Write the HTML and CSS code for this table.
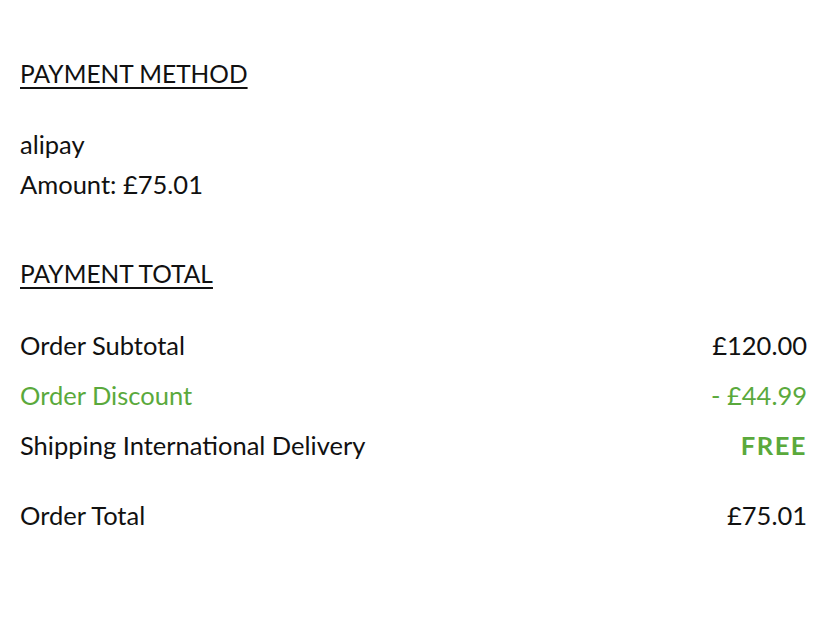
FILE: index.html
```html
<!DOCTYPE html>
<html lang="en">
<head>
    <meta charset="UTF-8">
    <meta name="viewport" content="width=device-width, initial-scale=1.0">
    <title>Payment</title>
    <link rel="stylesheet" href="styles.css">
</head>
<body>
    <main>
        <section class="block">
            <h2 class="block-title">Payment Method</h2>
            <div class="method">
                <p>alipay</p>
                <p>Amount: £75.01</p>
            </div>
        </section>

        <section class="block">
            <h2 class="block-title">Payment Total</h2>
            <div class="totals">
                <div class="row">
                    <span>Order Subtotal</span>
                    <span>£120.00</span>
                </div>
                <div class="row green">
                    <span>Order Discount</span>
                    <span>- £44.99</span>
                </div>
                <div class="row">
                    <span>Shipping International Delivery</span>
                    <span class="free">FREE</span>
                </div>
                <div class="row grand">
                    <span>Order Total</span>
                    <span>£75.01</span>
                </div>
            </div>
        </section>
    </main>
</body>
</html>
```

FILE: styles.css
```css
body {
    margin: 0;
    background-color: white;
    color: #111;
    font-family: Lato, "Liberation Sans", sans-serif;
    font-size: 25.5px;
}

main {
    padding: 54px 21px 0 20px;
}

p {
    margin: 0;
}

.block {
    margin-bottom: 50px;
}

.block-title {
    margin: 0;
    font-size: 24.5px;
    font-weight: normal;
    line-height: 40px;
    text-transform: uppercase;
    text-decoration: underline;
    text-decoration-thickness: 1.5px;
    text-underline-offset: 4px;
}

.method {
    margin-top: 30px;
    line-height: 40px;
}

.totals {
    margin-top: 26px;
}

.row {
    display: flex;
    justify-content: space-between;
    line-height: 50px;
}

.green {
    color: #5aa93c;
}

.free {
    color: #5aa93c;
    font-weight: bold;
    letter-spacing: 1.5px;
}

.grand {
    margin-top: 20px;
}
```
